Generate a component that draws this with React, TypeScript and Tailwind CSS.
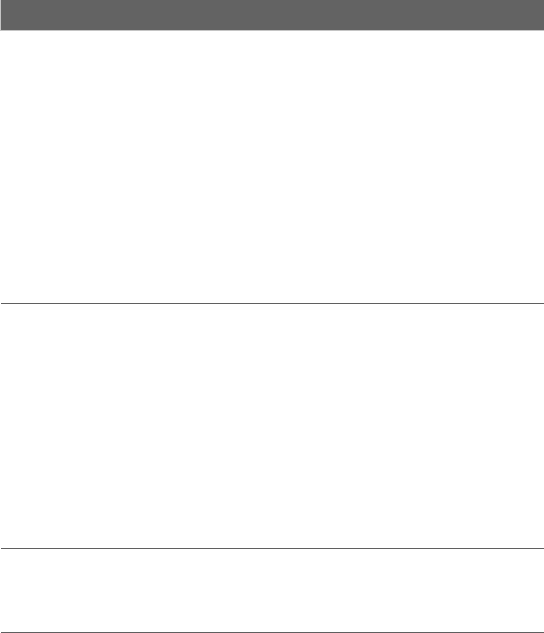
export default function App() {
  return (
    <div className="w-[544px] h-[633px] bg-white overflow-hidden font-['Liberation_Sans',sans-serif]">
      <div className="h-[31px] bg-[#636363] border-l border-b border-[#c4c4c4]" />
      <div className="ml-px flex flex-col">
        <section className="h-[273px] border-b border-[#5f5f5f]" />
        <section className="h-[245px] border-b border-[#5f5f5f]" />
        <section className="h-[84px] border-b border-[#5f5f5f]" />
      </div>
    </div>
  );
}
